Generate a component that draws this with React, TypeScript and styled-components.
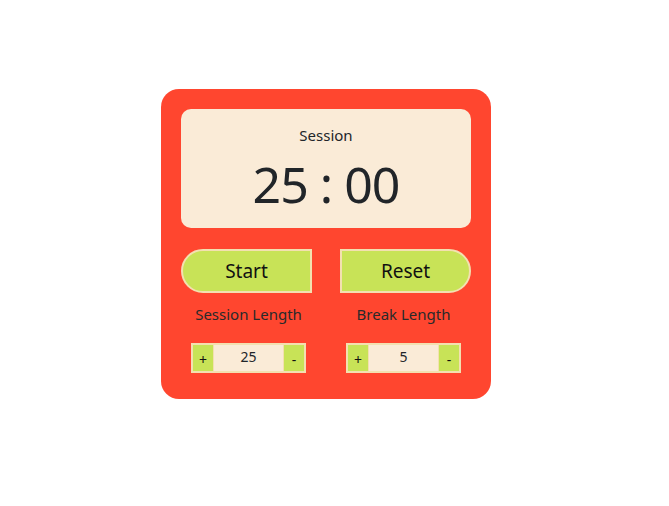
import React from "react";
import styled, { createGlobalStyle } from "styled-components";

const Global = createGlobalStyle`
  html, body { margin: 0; padding: 0; background: #ffffff; }
  body { font-family: "Noto Sans", "Open Sans", sans-serif; color: #212529; }
`;

const Page = styled.div`
  width: 669px;
  height: 506px;
  display: flex;
  justify-content: flex-start;
  align-items: flex-start;
  padding: 89px 0 0 161px;
  box-sizing: border-box;
`;

const Card = styled.div`
  width: 330px;
  height: 310px;
  box-sizing: border-box;
  background: #ff462f;
  border-radius: 18px;
  padding: 20px 20px 0 20px;
  display: flex;
  flex-direction: column;
`;

const Display = styled.div`
  height: 119px;
  background: #faebd7;
  border-radius: 10px;
  display: flex;
  flex-direction: column;
  align-items: center;
`;

const Label = styled.div`
  margin-top: 16px;
  font-size: 15px;
  line-height: 20px;
  color: #212529;
`;

const Time = styled.div`
  margin-top: 9px;
  font-size: 50px;
  line-height: 60px;
  color: #212529;
  letter-spacing: -1px;
`;

const ButtonRow = styled.div`
  margin-top: 21px;
  display: flex;
  justify-content: space-between;
`;

const MainButton = styled.button<{ $side: "left" | "right" }>`
  width: 131px;
  height: 44px;
  box-sizing: border-box;
  background: #c8e357;
  border: 2px solid #f3e0b0;
  border-radius: ${(p) => (p.$side === "left" ? "22px 0 0 22px" : "0 22px 22px 0")};
  font-family: "Noto Sans", "Open Sans", sans-serif;
  font-size: 19px;
  color: #111;
  padding: 0;
  cursor: pointer;
`;

const SettingsRow = styled.div`
  margin-top: 11px;
  display: flex;
  justify-content: space-between;
`;

const Column = styled.div`
  width: 135px;
  display: flex;
  flex-direction: column;
  align-items: center;
`;

const SettingLabel = styled.div`
  font-size: 15px;
  line-height: 20px;
  color: #2a2a2a;
`;

const Stepper = styled.div`
  margin-top: 19px;
  width: 115px;
  height: 30px;
  box-sizing: border-box;
  background: #faebd7;
  border: 2px solid #f3e0b0;
  display: flex;
  align-items: stretch;
`;

const StepButton = styled.button`
  width: 20px;
  padding: 0;
  margin: 0;
  border: none;
  background: #c8e357;
  font-family: "Noto Sans", "Open Sans", sans-serif;
  font-size: 14px;
  color: #111;
  display: flex;
  align-items: center;
  justify-content: center;
  padding-top: 3px;
  box-sizing: border-box;
  cursor: pointer;
`;

const StepValue = styled.div`
  flex: 1;
  display: flex;
  align-items: center;
  justify-content: center;
  font-size: 14px;
  color: #212529;
  padding-bottom: 3px;
  border-left: 1px solid #f3e0b0;
  border-right: 1px solid #f3e0b0;
`;

function Setting({ label, value }: { label: string; value: number }) {
  return (
    <Column>
      <SettingLabel>{label}</SettingLabel>
      <Stepper>
        <StepButton>+</StepButton>
        <StepValue>{value}</StepValue>
        <StepButton>-</StepButton>
      </Stepper>
    </Column>
  );
}

export default function App() {
  return (
    <>
      <Global />
      <Page>
        <Card>
          <Display>
            <Label>Session</Label>
            <Time>25 : 00</Time>
          </Display>
          <ButtonRow>
            <MainButton $side="left">Start</MainButton>
            <MainButton $side="right">Reset</MainButton>
          </ButtonRow>
          <SettingsRow>
            <Setting label="Session Length" value={25} />
            <Setting label="Break Length" value={5} />
          </SettingsRow>
        </Card>
      </Page>
    </>
  );
}
